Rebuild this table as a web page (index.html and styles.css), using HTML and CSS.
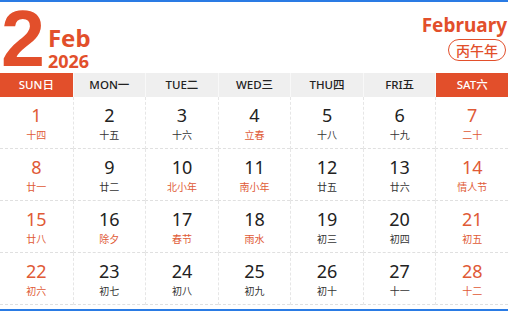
FILE: index.html
```html
<!DOCTYPE html>
<html lang="zh">
<head>
<meta charset="utf-8">
<link rel="stylesheet" href="styles.css">
</head>
<body>
<div class="cal">
  <div class="head">
    <div class="left">
      <div class="big">2</div>
      <div class="my">
        <div class="mon">Feb</div>
        <div class="yr">2026</div>
      </div>
    </div>
    <div class="right">
      <div class="full">February</div>
      <div class="pill">丙午年</div>
    </div>
  </div>
  <div class="week">
    <div class="wd we">SUN日</div>
    <div class="wd">MON一</div>
    <div class="wd">TUE二</div>
    <div class="wd">WED三</div>
    <div class="wd">THU四</div>
    <div class="wd">FRI五</div>
    <div class="wd we">SAT六</div>
  </div>
  <div class="grid">
    <div class="c r"><span class="n">1</span><span class="l">十四</span></div>
    <div class="c"><span class="n">2</span><span class="l">十五</span></div>
    <div class="c"><span class="n">3</span><span class="l">十六</span></div>
    <div class="c"><span class="n">4</span><span class="l h">立春</span></div>
    <div class="c"><span class="n">5</span><span class="l">十八</span></div>
    <div class="c"><span class="n">6</span><span class="l">十九</span></div>
    <div class="c r"><span class="n">7</span><span class="l">二十</span></div>

    <div class="c r"><span class="n">8</span><span class="l">廿一</span></div>
    <div class="c"><span class="n">9</span><span class="l">廿二</span></div>
    <div class="c"><span class="n">10</span><span class="l h">北小年</span></div>
    <div class="c"><span class="n">11</span><span class="l h">南小年</span></div>
    <div class="c"><span class="n">12</span><span class="l">廿五</span></div>
    <div class="c"><span class="n">13</span><span class="l">廿六</span></div>
    <div class="c r"><span class="n">14</span><span class="l">情人节</span></div>

    <div class="c r"><span class="n">15</span><span class="l">廿八</span></div>
    <div class="c"><span class="n">16</span><span class="l h">除夕</span></div>
    <div class="c"><span class="n">17</span><span class="l h">春节</span></div>
    <div class="c"><span class="n">18</span><span class="l h">雨水</span></div>
    <div class="c"><span class="n">19</span><span class="l">初三</span></div>
    <div class="c"><span class="n">20</span><span class="l">初四</span></div>
    <div class="c r"><span class="n">21</span><span class="l">初五</span></div>

    <div class="c r"><span class="n">22</span><span class="l">初六</span></div>
    <div class="c"><span class="n">23</span><span class="l">初七</span></div>
    <div class="c"><span class="n">24</span><span class="l">初八</span></div>
    <div class="c"><span class="n">25</span><span class="l">初九</span></div>
    <div class="c"><span class="n">26</span><span class="l">初十</span></div>
    <div class="c"><span class="n">27</span><span class="l">十一</span></div>
    <div class="c r"><span class="n">28</span><span class="l">十二</span></div>
  </div>
</div>
</body>
</html>
```

FILE: styles.css
```css
html, body {
  margin: 0;
  padding: 0;
  background: #fff;
}
body {
  width: 508px;
  height: 311px;
  overflow: hidden;
  font-family: "Noto Sans", "Noto Sans CJK SC", sans-serif;
}
.cal {
  height: 307px;
  border-top: 2px solid #2a7be4;
  border-bottom: 2px solid #2a7be4;
  display: flex;
  flex-direction: column;
}
.head {
  height: 71px;
  display: flex;
  justify-content: space-between;
  box-sizing: border-box;
}
.left {
  display: flex;
  align-items: flex-start;
  padding-left: 1px;
  padding-top: 8px;
}
.big {
  font-family: "Liberation Sans", Arial, sans-serif;
  font-size: 79px;
  font-weight: 700;
  color: #e24f2b;
  line-height: 58px;
  height: 58px;
}
.my {
  align-self: flex-end;
  margin-left: 3px;
  padding-bottom: 2px;
  color: #e24f2b;
  font-weight: 700;
}
.mon {
  font-size: 24px;
  line-height: 26px;
}
.yr {
  font-size: 18px;
  line-height: 20px;
}
.right {
  display: flex;
  flex-direction: column;
  align-items: flex-end;
  padding-top: 10px;
  padding-right: 1px;
}
.full {
  font-size: 19px;
  font-weight: 700;
  color: #e24f2b;
  line-height: 26px;
}
.pill {
  margin-top: 1px;
  margin-right: 1px;
  border: 1.5px solid #e24f2b;
  border-radius: 12px;
  color: #e24f2b;
  font-family: "Noto Sans CJK SC", sans-serif;
  font-weight: 500;
  font-size: 14px;
  line-height: 20px;
  padding: 0 7px;
}
.week {
  height: 24px;
  display: grid;
  grid-template-columns: repeat(7, 1fr);
  background: #efefef;
}
.wd {
  font-family: "Noto Sans", "Noto Sans CJK SC", sans-serif;
  font-size: 11.5px;
  font-weight: 500;
  color: #222;
  text-align: center;
  line-height: 24px;
  border-left: 1px solid #f8f8f8;
}
.wd:first-child { border-left: none; }
.wd.we {
  background: #e24f2b;
  color: #fff;
}
.grid {
  display: grid;
  grid-template-columns: repeat(7, 1fr);
  grid-auto-rows: 52px;
}
.c {
  display: flex;
  flex-direction: column;
  align-items: center;
  padding-top: 7px;
  box-sizing: border-box;
  border-bottom: 1px dashed #e0e0e0;
  border-left: 1px dashed #e6e6e6;
}
.c:nth-child(7n+1) { border-left: none; }
.n {
  font-size: 18px;
  line-height: 22px;
  color: #222;
}
.l {
  font-family: "Noto Sans CJK SC", sans-serif;
  font-size: 10px;
  line-height: 16px;
  margin-top: 1px;
  color: #333;
}
.c.r .n, .c.r .l, .l.h {
  color: #e05a36;
}
```
